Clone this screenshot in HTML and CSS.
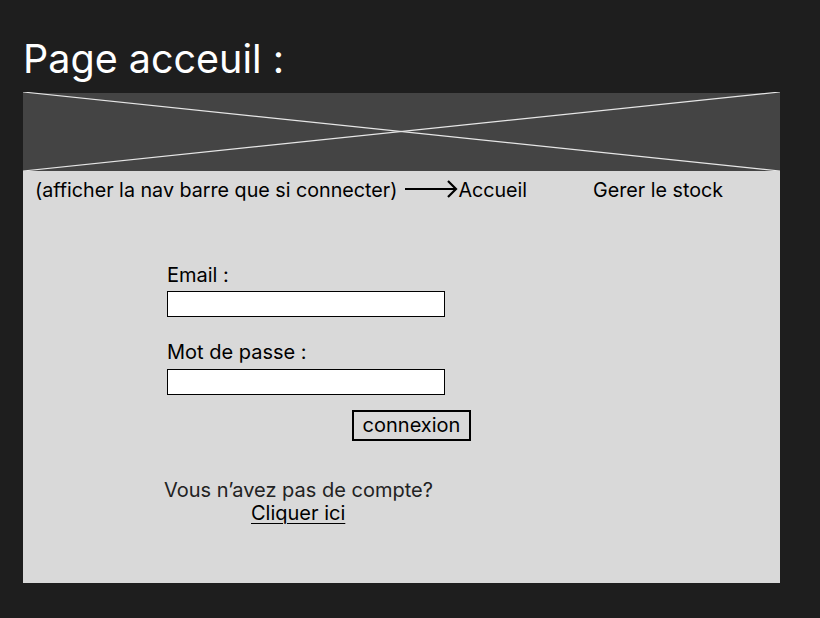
FILE: index.html
```html
<!DOCTYPE html>
<html lang="fr">
<head>
<meta charset="utf-8">
<title>Page acceuil</title>
<link rel="stylesheet" href="styles.css">
</head>
<body>
<h1 class="title">Page acceuil :</h1>
<div class="frame">
  <div class="banner">
    <svg class="cross" viewBox="0 0 757 79" preserveAspectRatio="none">
      <line x1="0" y1="0" x2="757" y2="79" stroke="#e6e6e6" stroke-width="1.2"/>
      <line x1="0" y1="79" x2="757" y2="0" stroke="#e6e6e6" stroke-width="1.2"/>
    </svg>
  </div>
  <div class="nav">
    <span class="note">(afficher la nav barre que si connecter)</span>
    <svg class="arrow" width="53" height="20" viewBox="0 0 53 20">
      <path d="M0 10 H51 M43 2 L51 10 L43 18" fill="none" stroke="#000" stroke-width="2.2"/>
    </svg>
    <span class="link">Accueil</span>
    <span class="link stock">Gerer le stock</span>
  </div>
  <form class="login">
    <label class="label">Email :</label>
    <div class="input"></div>
    <label class="label second">Mot de passe :</label>
    <div class="input"></div>
    <div class="btnrow"><span class="btn">connexion</span></div>
    <p class="noacc">Vous n’avez pas de compte?</p>
    <p class="click"><span class="u">Cliquer ici</span></p>
  </form>
</div>
</body>
</html>
```
FILE: styles.css
```css
* { box-sizing: border-box; }
html, body { margin: 0; padding: 0; }
body {
  background: #1e1e1e;
  width: 820px;
  height: 618px;
  overflow: hidden;
  font-family: Inter, "Noto Sans", sans-serif;
}
.title {
  margin: 0;
  padding: 36px 0 0 23px;
  height: 93px;
  font-weight: 400;
  font-size: 39.5px;
  line-height: 46px;
  color: #fff;
}
.frame {
  margin-left: 23px;
  width: 757px;
  height: 490px;
  background: #d9d9d9;
}
.banner {
  height: 78px;
  background: #444444;
  position: relative;
}
.cross {
  position: absolute;
  left: 0; top: -1px;
  width: 757px;
  height: 79px;
  display: block;
}
.nav {
  display: flex;
  align-items: center;
  height: 36px;
  padding-left: 12px;
  padding-top: 1px;
  font-size: 19.7px;
  color: #000;
}
.note { margin-right: 8px; }
.arrow { display: block; margin-top: -2px; }
.stock { margin-left: 66px; }
.login {
  margin: 0;
  padding: 56px 0 0 144px;
  display: flex;
  flex-direction: column;
  font-size: 20px;
  color: #000;
}
.label { display: block; line-height: 24px; height: 24px; }
.second { margin-top: 23px; }
.input {
  margin-top: 4px;
  width: 278px;
  height: 26px;
  background: #fff;
  border: 1px solid #000;
}
.input + .second + .input { margin-top: 5px; }
.btnrow { display: flex; padding-left: 185px; margin-top: 15px; }
.btn {
  display: block;
  border: 2px solid #000;
  width: 119px;
  height: 31px;
  line-height: 27px;
  text-align: center;
}
.noacc {
  margin: 37px 0 0 -3px;
  line-height: 24px;
  color: #222;
}
.click {
  margin: -1px 0 0 84px;
  line-height: 24px;
  color: #000;
}
.u {
  text-decoration: underline;
  text-underline-offset: 3px;
  text-decoration-thickness: 1px;
}
```
